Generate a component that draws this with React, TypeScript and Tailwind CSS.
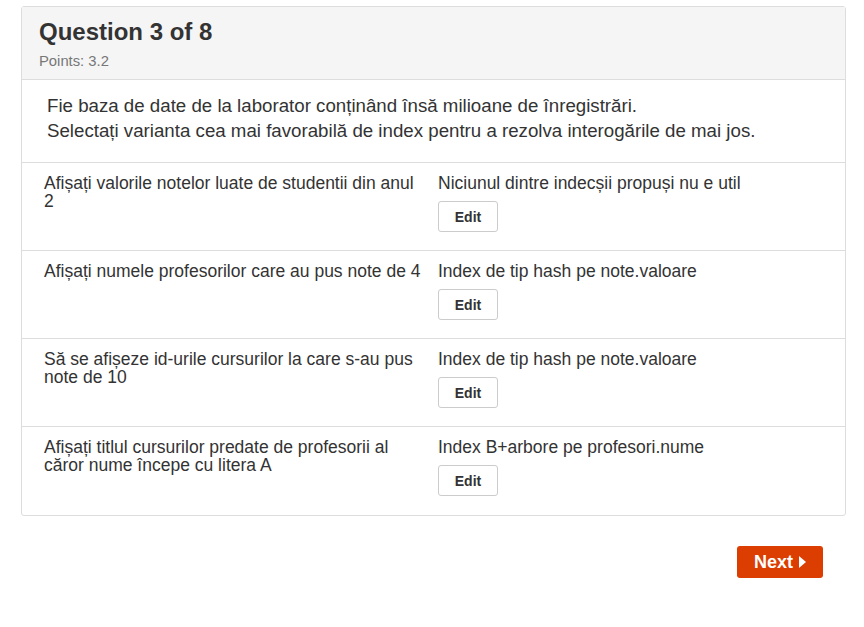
const rows = [
  {
    q: 'Afișați valorile notelor luate de studentii din anul 2',
    a: 'Niciunul dintre indecșii propuși nu e util',
  },
  {
    q: 'Afișați numele profesorilor care au pus note de 4',
    a: 'Index de tip hash pe note.valoare',
  },
  {
    q: 'Să se afișeze id-urile cursurilor la care s-au pus note de 10',
    a: 'Index de tip hash pe note.valoare',
  },
  {
    q: 'Afișați titlul cursurilor predate de profesorii al căror nume începe cu litera A',
    a: 'Index B+arbore pe profesori.nume',
  },
];

export default function App() {
  return (
    <div className="min-h-[627px] bg-white pt-[6px] font-['Liberation_Sans',Arial,sans-serif] text-[#333]">
      <div className="ml-[21px] w-[825px] rounded-[3px] border border-[#ddd]">
        <div className="h-[73px] border-b border-[#ddd] bg-[#f5f5f5] px-[17px] pt-[12px]">
          <h1 className="text-[24px] leading-[26px] font-bold">Question 3 of 8</h1>
          <p className="mt-[8px] text-[14.8px] leading-[16px] text-[#777]">Points: 3.2</p>
        </div>

        <div className="h-[83px] border-b border-[#ddd] px-[25px] pt-[13px] text-[18.7px] leading-[25px]">
          <p>Fie baza de date de la laborator conținând însă milioane de înregistrări.</p>
          <p>Selectați varianta cea mai favorabilă de index pentru a rezolva interogările de mai jos.</p>
        </div>

        {rows.map((r, i) => (
          <div
            key={i}
            className={`grid h-[88px] grid-cols-[394px_1fr] pl-[22px] pt-[11px] text-[17.5px] leading-[18px] ${
              i < rows.length - 1 ? 'border-b border-[#ddd]' : ''
            }`}
          >
            <div className="pr-[10px]">{r.q}</div>
            <div>
              <div>{r.a}</div>
              <button className="mt-[9px] h-[31px] w-[60px] rounded-[3px] border border-[#ccc] bg-white text-[14px] font-bold text-[#333]">
                Edit
              </button>
            </div>
          </div>
        ))}
      </div>

      <div className="flex w-[846px] justify-end pt-[30px] pr-[23px]">
        <button className="flex h-[32px] w-[86px] items-center justify-center gap-[6px] rounded-[3px] bg-[#dc3d00] text-[18px] font-bold text-white">
          Next
          <svg width="7" height="12" viewBox="0 0 7 12">
            <path d="M0 0 L7 6 L0 12 Z" fill="white" />
          </svg>
        </button>
      </div>
    </div>
  );
}
